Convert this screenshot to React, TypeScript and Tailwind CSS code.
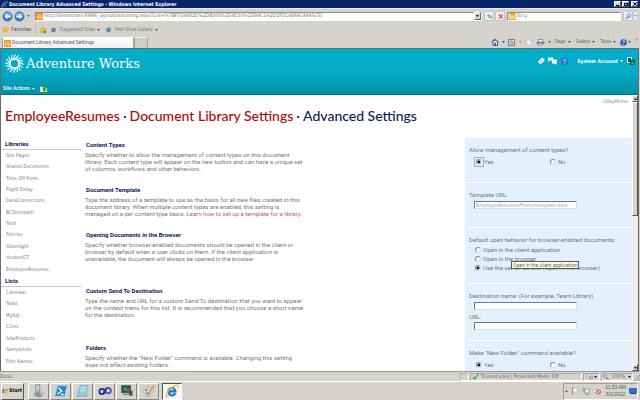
import React, { ReactNode } from "react";

const sans = "font-['Roboto','Liberation_Sans',Arial,sans-serif]";
const ui = "font-['DejaVu_Sans_Condensed','DejaVu_Sans',sans-serif]";

const libraries = ["Site Pages", "Shared Documents", "Time Off Form", "Flight Delay", "DataConnections", "BCSInfopath", "Testt", "Policies", "Silverlight", "studentCT", "EmployeeResumes"];
const lists = ["Calendar", "Tasks", "MySql", "Cities", "AdwProducts", "SampleInfo", "Pilot Names"];

function FeedIcon() {
  return (
    <svg viewBox="0 0 8 8" className="size-[7px] shrink-0">
      <rect width="8" height="8" rx="1" fill="#f78f1e" />
      <path d="M1.500 6.500V4L4 1.500 6.500 4v2.500M3 6.500V4.700l1-1 1 1v1.800" stroke="#fff" strokeWidth=".8" fill="none" />
    </svg>
  );
}

function IEIcon({ className }: { className: string }) {
  return (
    <svg viewBox="0 0 16 16" className={className}>
      <path d="M13 9.500H5.600c.2 3 3.600 3.200 4.400 1.200h2.800C11 15.600 3 15 3 8.600 3 2.500 13 1.500 13 9.500zM5.700 7.200h4.500c-.3-2.600-4.200-2.600-4.500 0z" fill="#1e7fd6" stroke="#1460b0" strokeWidth=".5" />
      <path d="M4.500 13.500C1 16 .5 13.500 2.500 10 5 5.500 10 1.500 13.500 1.200c2-.1 1.800 1.800.8 3.600" fill="none" stroke="#f2b632" strokeWidth="1.400" />
    </svg>
  );
}

function Star({ className, add }: { className: string; add?: boolean }) {
  return (
    <svg viewBox="0 0 10 10" className={className}>
      <path d="M5 .5l1.300 3 3.200.3-2.400 2.100.8 3.200L5 7.500 2.100 9.100l.8-3.200L.5 3.800l3.200-.3z" fill="#fdc02f" stroke="#d98e12" strokeWidth=".6" />
      {add && <path d="M5 6.500h2v-2l3 3-3 2.500V8.500H5z" fill="#3fae3a" />}
    </svg>
  );
}

function Down({ className = "text-[#444]" }: { className?: string }) {
  return (
    <svg viewBox="0 0 4 3" className={`h-[2px] w-[3px] shrink-0 ${className}`}>
      <path d="M0 0h4L2 3z" fill="currentColor" />
    </svg>
  );
}

function NavArrow({ back }: { back?: boolean }) {
  return (
    <button aria-label={back ? "Back" : "Forward"} className="size-[11px] shrink-0">
      <svg viewBox="0 0 12 12" className="size-[11px]">
        <circle cx="6" cy="6" r="5.500" fill="#2e74c9" stroke="#9db4d0" strokeWidth=".8" />
        <path d="M1.500 5a4.600 4 0 0 1 9 0z" fill="#7eb0ea" />
        <path d={back ? "M2.500 6L6 3v2h3.500v2H6v2z" : "M9.500 6L6 3v2H2.500v2H6v2z"} fill="#fff" />
      </svg>
    </button>
  );
}

function TitleBar() {
  const btn = "flex h-[6px] w-[7px] items-center justify-center border border-t-white border-l-white border-r-[#555] border-b-[#555] bg-[#d6d3ce]";
  return (
    <div className="flex h-2 items-center gap-px bg-[#08246b] pr-[2px] pl-px">
      <IEIcon className="size-[7px]" />
      <h1 className={`flex-1 text-[5px] leading-[8px] font-bold whitespace-nowrap text-white ${ui}`}>Document Library Advanced Settings - Windows Internet Explorer</h1>
      <button aria-label="Minimize" className={btn}><span className="mt-[2px] h-px w-[3px] bg-black" /></button>
      <button aria-label="Restore" className={btn}><span className="h-[3px] w-[4px] border border-black" /></button>
      <button aria-label="Close" className={`ml-px ${btn}`}>
        <svg viewBox="0 0 4 4" className="size-[4px]"><path d="M.3.3l3.400 3.400M3.700.3L.3 3.700" stroke="#000" /></svg>
      </button>
    </div>
  );
}

function AddressRow() {
  const btn = "flex h-[10px] items-center justify-center rounded-[1px] border border-[#c3c6d0] bg-[#eceef6]";
  return (
    <div className="flex h-[15px] items-center border-t border-[#ece9e4] pl-[2px] pr-[2px]">
      <NavArrow back />
      <span className="w-px" />
      <NavArrow />
      <span className="ml-[2px] flex w-[8px]"><Down className="text-[#2a6a9a]" /></span>
      <div className="flex h-[9px] flex-1 items-center border border-[#8c8c8c] border-r-white border-b-white bg-white">
        <FeedIcon />
        <input aria-label="Address" readOnly value="http://demoshare:6969/_layouts/advsetng.aspx?List=%7BF7D4882D%2DB300%2D4D30%2D99C1%2D2FD14864C46A%7D" className={`h-[7px] min-w-0 flex-1 pl-px text-[5px] text-[#777] outline-none ${ui}`} />
        <button aria-label="Show history" className="flex h-[8px] w-[7px] items-center justify-center border border-t-white border-l-white border-r-[#666] border-b-[#666] bg-[#d6d3ce]"><Down className="text-black" /></button>
      </div>
      <button aria-label="Refresh" className={`ml-[2px] w-[10px] ${btn}`}>
        <svg viewBox="0 0 8 8" className="size-[7px]"><path d="M3 5V2.500M1.500 3.500L3 2l1.500 1.500M5.500 3v2.500M4 4.500L5.500 6 7 4.500" stroke="#2c9a3f" fill="none" /></svg>
      </button>
      <button aria-label="Stop" className={`ml-px w-[10px] ${btn}`}>
        <svg viewBox="0 0 8 8" className="size-[7px]"><path d="M2 1.500l4.500 5M6.500 1.500l-4.500 5" stroke="#d9403c" strokeWidth="1.200" /></svg>
      </button>
      <label className="ml-[2px] flex h-[9px] w-[114px] items-center border border-[#8c8c8c] border-r-white border-b-white bg-white">
        <svg viewBox="0 0 8 8" className="h-[7px] w-[8px]"><rect width="8" height="8" fill="#f9a11b" /><path d="M1.500 1v5h4.500V3.500H1.500" stroke="#fff" fill="none" /></svg>
        <input aria-label="Search" placeholder="Bing" className={`h-[7px] min-w-0 flex-1 pl-px text-[5px] text-[#777] outline-none placeholder:text-[#999] ${ui}`} />
      </label>
      <button aria-label="Search" className={`ml-[2px] w-[10px] ${btn}`}>
        <svg viewBox="0 0 8 8" className="size-[7px]"><circle cx="4.800" cy="3" r="2" fill="#dce9fb" stroke="#4b7fd0" /><path d="M3.300 4.500L1 7" stroke="#4b7fd0" strokeWidth="1.200" /></svg>
      </button>
      <button aria-label="Search options" className={`w-[5px] ${btn}`}><Down className="text-[#7a9ad0]" /></button>
    </div>
  );
}

function FavoritesRow() {
  return (
    <div className={`flex h-[13px] items-center pl-[2px] text-[5px] text-[#858585] ${sans}`}>
      <button className={`flex items-center gap-[2px] text-[#555] ${sans}`}><Star className="size-[7px]" />Favorites</button>
      <span className="mr-[3px] ml-[4px] h-[9px] w-px bg-[#b5b2ad]" />
      <button aria-label="Add to favorites"><Star add className="size-[8px]" /></button>
      <button className="ml-[3px] flex items-center gap-[2px]"><IEIcon className="size-[7px]" />Suggested Sites <Down /></button>
      <button className="ml-[5px] flex items-center gap-[2px]"><IEIcon className="size-[7px]" />Web Slice Gallery <Down /></button>
    </div>
  );
}

function TabRow() {
  return (
    <div className={`flex h-3 items-center justify-between text-[5px] text-[#555] ${ui}`}>
      <div className="flex h-full items-end">
        <button className={`ml-[2px] flex h-[11px] w-[132px] items-center gap-px rounded-t-[1px] border border-b-0 border-[#a5a29d] border-t-white bg-linear-to-b from-white to-[#f0efed] pl-px ${sans}`}>
          <FeedIcon />Document Library Advanced Settings
        </button>
        <button aria-label="New tab" className="h-[11px] w-[14px] border-x border-t border-[#a5a29d] border-t-[#f4f3f1] bg-[#cfccc7]" />
      </div>
      <div className="flex items-center pr-[2px]">
        <button aria-label="Home" className="flex items-center gap-[3px]">
          <svg viewBox="0 0 8 8" className="size-[8px]"><path d="M.5 4L4 1l3.500 3" stroke="#5a6c92" fill="none" /><path d="M2 3.500v4h4.500v-4L4 2z" fill="#fff" stroke="#33508e" /><rect x="3.500" y="4.500" width="1.500" height="3" fill="#33508e" /></svg><Down />
        </button>
        <button aria-label="Feeds" className="ml-[3px] flex items-center gap-[4px]">
          <svg viewBox="0 0 8 8" className="size-[7px]"><rect x=".5" y=".5" width="7" height="7" fill="#ddd" stroke="#777" /><path d="M2 6h.5M2 4a2 2 0 0 1 2 2M2 2a4 4 0 0 1 4 4" stroke="#777" fill="none" /></svg><Down className="text-[#999]" />
        </button>
        <button aria-label="Read mail" className="ml-[4px]"><svg viewBox="0 0 8 6" className="h-[5px] w-[7px]"><rect width="8" height="6" fill="#f7f7fa" stroke="#aaa" /><path d="M5 2.500h2.500" stroke="#e2704f" /></svg></button>
        <button aria-label="Print" className="ml-[3px] flex items-center gap-[3px]">
          <svg viewBox="0 0 10 8" className="h-[7px] w-[9px]"><rect x="2.500" y=".5" width="5" height="3" fill="#fff" stroke="#888" /><rect x=".5" y="3" width="9" height="3" rx="1" fill="#7d828c" /><rect x="2.500" y="5" width="5" height="2.500" fill="#c9dafa" stroke="#777" strokeWidth=".5" /></svg><Down />
        </button>
        <button className="ml-[4px] flex items-center gap-[2px]">Page <Down /></button>
        <button className="ml-[5px] flex items-center gap-[2px]">Safety <Down /></button>
        <button className="ml-[5px] flex items-center gap-[2px]">Tools <Down /></button>
        <button aria-label="Help" className="ml-[4px] flex items-center gap-px">
          <svg viewBox="0 0 8 8" className="size-[7px]"><circle cx="4" cy="4" r="3.800" fill="#2a5cc0" /><path d="M2.800 3c0-1.600 2.500-1.500 2.400 0C5.200 4 4 3.800 4 5M4 5.800v.8" stroke="#fff" fill="none" strokeWidth=".9" /></svg><Down />
        </button>
        <span className="mb-[4px] ml-[4px]">»</span>
      </div>
    </div>
  );
}

function SiteHeader() {
  return (
    <header className="flex h-[46px] flex-col justify-between border-b border-[#04707f] bg-linear-to-b from-[#02aecb] via-[#04abc6] to-[#0290a6]">
      <div className="flex items-start justify-between">
        <div className="flex items-center gap-[2px] pt-[5px] pl-[4px]">
          <svg viewBox="-10 -10 20 20" className="size-[19px]">
            {[0, 22.5, 45, 67.5, 90, 112.5, 135, 157.5, 180, 202.5, 225, 247.5, 270, 292.5, 315, 337.5].map((a) => (
              <path key={a} transform={`rotate(${a})`} d="M-2.500-4Q2-5 4.500-8.500" fill="none" stroke="#fff" strokeWidth="1.200" />
            ))}
          </svg>
          <span className="text-[13px] leading-[18px] whitespace-nowrap text-white font-['DejaVu_Serif',serif]">Adventure Works</span>
        </div>
        <div className={`flex items-center gap-[3px] pt-[8px] pr-[3px] ${ui}`}>
          <svg viewBox="0 0 8 8" className="size-[8px]"><path d="M1 5l3.500-4 3 .5L7 4 3.500 7.500z" fill="#fff" /><path d="M3 5l2-2" stroke="#0aa" strokeWidth=".7" /></svg>
          <svg viewBox="0 0 9 8" className="h-[8px] w-[9px]"><path d="M0 .5h5v3h-3L.5 5zM4 2.500h5v4H8V8L6 6.500H4z" fill="#fff" /></svg>
          <svg viewBox="0 0 8 8" className="mx-px size-[7px]"><circle cx="4" cy="4" r="4" fill="#2f6fd0" /><path d="M2.800 3c0-1.600 2.500-1.500 2.400 0C5.200 4 4 3.800 4 5M4 5.800v.8" stroke="#fff" fill="none" strokeWidth=".9" /></svg>
          <button className="ml-[5px] flex items-center gap-[2px] text-[5px] leading-[8px] font-bold text-white">System Account <Down className="text-white" /></button>
          <svg viewBox="0 0 8 8" className="ml-px size-[8px]"><path d="M.5.5h4v5h-4z" fill="#157" stroke="#fff" /><rect x="3" y="3" width="4.500" height="4.500" fill="#174" stroke="#333" strokeWidth=".6" /><path d="M4.500 6h2" stroke="#dd4" /></svg>
        </div>
      </div>
      <div className={`flex h-[11px] items-center pl-[2px] text-[5px] font-medium text-white ${sans}`}>
        <button className="flex items-center gap-[2px]">Site Actions <Down className="text-white" /></button>
        <button aria-label="Navigate up" className="ml-[5px]"><svg viewBox="0 0 8 7" className="h-[6px] w-[7px]"><path d="M0 1h3l1 1h4v5H0z" fill="#f3e3a0" /><path d="M3.500 6V3.500H2.500L5 1l2.500 2.500h-1V6z" fill="#2fa32f" /></svg></button>
      </div>
    </header>
  );
}

function NavGroup({ title, items, height }: { title: string; items: string[]; height: string }) {
  return (
    <section>
      <h3 className={`h-[12px] border-b border-[#c9c9c9] pl-[4px] text-[6px] leading-[12px] font-bold text-[#0a1a5c] ${sans}`}>{title}</h3>
      <ul className={`grid auto-rows-fr items-center pl-[5px] text-[5px] ${height} ${ui}`}>
        {items.map((i) => (
          <li key={i} className="flex"><a href="#" className="text-[#7a7a7a]">{i}</a></li>
        ))}
      </ul>
    </section>
  );
}

function Row({ title, lines, height, children }: { title: string; lines: ReactNode[]; height: string; children: ReactNode }) {
  return (
    <section className={`flex shrink-0 ${height}`}>
      <div className="flex-1 pt-[3px] pl-[4px] whitespace-nowrap">
        <h3 className={`pl-px text-[6px] leading-[8px] font-bold text-[#0a1a5c] ${sans}`}>{title}</h3>
        <p className={`pt-[2px] text-[6px] leading-[7px] text-[#777] ${sans}`}>
          {lines.map((l, n) => <span key={n} className="block">{l}</span>)}
        </p>
      </div>
      <div className={`w-[167px] border-b border-white bg-[#e3f1ff] pt-[8px] pl-[4px] text-[6px] leading-[8px] whitespace-nowrap text-[#6c7680] ${sans}`}>{children}</div>
    </section>
  );
}

function Radio({ name, label, checked, focus }: { name: string; label: string; checked?: boolean; focus?: boolean }) {
  return (
    <label className="flex items-center">
      <span className={`flex size-[8px] items-center justify-center ${focus ? "outline outline-[#aaa]" : ""}`}>
        <input type="radio" name={name} defaultChecked={checked} className="size-[6px] appearance-none rounded-full border border-[#8a8a8a] border-r-[#ddd] border-b-[#ddd] bg-white checked:bg-[radial-gradient(circle,#111_1px,#fff_2px)]" />
      </span>
      <span className="pl-px">{label}</span>
    </label>
  );
}

const field = `ml-[5px] block h-[8px] w-[103px] border border-[#777] border-r-[#ddd] border-b-[#ddd] bg-white px-px text-[5px] outline-none ${ui}`;

function YesNo({ name, focus }: { name: string; focus?: boolean }) {
  return (
    <div className="mt-[4px] grid w-[154px] grid-cols-2 pl-[6px]">
      <Radio name={name} label="Yes" checked focus={focus} />
      <Radio name={name} label="No" />
    </div>
  );
}

function Settings() {
  return (
    <div className="min-w-0 flex-1">
      <Row title="Content Types" height="h-[45px]" lines={["Specify whether to allow the management of content types on this document", "library. Each content type will appear on the new button and can have a unique set", "of columns, workflows and other behaviors."]}>
        <p>Allow management of content types?</p>
        <YesNo name="ct" focus />
      </Row>
      <Row title="Document Template" height="h-[45px]" lines={["Type the address of a template to use as the basis for all new files created in this", "document library. When multiple content types are enabled, this setting is", <>managed on a per content type basis. <a href="#" className="text-[#c0605a]">Learn how to set up a template for a library.</a></>]}>
        <label htmlFor="tpl" className="block">Template URL:</label>
        <input id="tpl" readOnly value="EmployeeResumes/Forms/template.dotx" className={`mt-[2px] text-[#999] ${field}`} />
      </Row>
      <Row title="Opening Documents in the Browser" height="h-[56px]" lines={["Specify whether browser-enabled documents should be opened in the client or", "browser by default when a user clicks on them. If the client application is", "unavailable, the document will always be opened in the browser."]}>
        <p>Default open behavior for browser-enabled documents:</p>
        <div className="relative mt-[2px] flex flex-col gap-px pl-[5px]">
          <Radio name="open" label="Open in the client application" />
          <Radio name="open" label="Open in the browser" />
          <Radio name="open" label="Use the server default (Open in the browser)" checked />
          <span role="tooltip" className="absolute top-[15px] left-[42px] h-[8px] border border-[#555] bg-[#ffffe1] px-px text-[5px] leading-[6px] text-[#666] font-['Roboto','Liberation_Sans',sans-serif]">Open in the client application</span>
        </div>
      </Row>
      <Row title="Custom Send To Destination" height="h-[57px]" lines={["Type the name and URL for a custom Send To destination that you want to appear", "on the context menu for this list. It is recommended that you choose a short name", "for the destination."]}>
        <label htmlFor="dest" className="block">Destination name: (For example, Team Library)</label>
        <input id="dest" className={`mt-[2px] ${field}`} />
        <label htmlFor="durl" className="mt-[3px] block">URL:</label>
        <input id="durl" className={`mt-px ${field}`} />
      </Row>
      <Row title="Folders" height="h-[46px]" lines={["Specify whether the \"New Folder\" command is available. Changing this setting", "does not affect existing folders."]}>
        <p>Make "New Folder" command available?</p>
        <YesNo name="nf" />
      </Row>
    </div>
  );
}

function ScrollBar() {
  const btn = "flex h-[7px] shrink-0 items-center justify-center border border-t-white border-l-white border-r-[#555] border-b-[#555] bg-[#d6d3ce]";
  return (
    <div className="flex w-[6px] shrink-0 flex-col bg-[#f0eeec]">
      <button aria-label="Scroll up" className={btn}><Down className="rotate-180 text-black" /></button>
      <div className="h-[114px] border border-t-white border-l-white border-r-[#555] border-b-[#555] bg-[#d6d3ce]" />
      <div className="flex-1" />
      <button aria-label="Scroll down" className={btn}><Down className="text-black" /></button>
    </div>
  );
}

function StatusBar() {
  const cell = "flex h-[8px] items-center border border-[#b0ada8] border-r-white border-b-white";
  return (
    <div className={`flex h-[10px] items-center gap-px border-t border-[#9a9894] bg-[#d6d3ce] text-[5px] text-[#666] ${ui}`}>
      <span className="flex-1">Done</span>
      <span className={`w-[9px] ${cell}`} />
      <div className={`w-[112px] gap-[2px] pl-px whitespace-nowrap ${cell}`}>
        <svg viewBox="0 0 8 8" className="size-[7px]"><path d="M1 4.500L3 7l4.500-6.500" fill="none" stroke="#35b535" strokeWidth="1.500" /></svg>
        Trusted sites | Protected Mode: Off
      </div>
      <div className={`w-[17px] justify-between px-[2px] ${cell}`}>
        <svg viewBox="0 0 8 8" className="size-[7px]"><circle cx="3" cy="3.500" r="2.500" fill="#eee" stroke="#999" /><rect x="4" y="4" width="3.500" height="3" fill="#bbb" stroke="#888" strokeWidth=".5" /></svg>
        <Down className="text-black" />
      </div>
      <div className={`w-[32px] justify-between px-px ${cell}`}>
        <svg viewBox="0 0 8 8" className="size-[6px]"><circle cx="3" cy="3" r="2" fill="#cfe4fb" stroke="#3b83d0" /><path d="M4.500 4.500L7.500 7.500" stroke="#a86b32" strokeWidth="1.400" /></svg>
        <span>100%</span>
        <Down className="text-black" />
      </div>
      <svg viewBox="0 0 6 6" className="size-[6px] self-end"><path d="M0 6L6 0M2.500 6L6 2.500M5 6l1-1" stroke="#8c8a86" strokeWidth=".8" /></svg>
    </div>
  );
}

function TaskButton({ label, children }: { label: string; children: ReactNode }) {
  return (
    <button aria-label={label} className="flex h-[17px] w-[21px] items-center justify-center border border-t-white border-l-white border-r-[#8a8884] border-b-[#8a8884] bg-[#d6d3ce]">
      <svg viewBox="0 0 16 16" className="size-[14px]">{children}</svg>
    </button>
  );
}

function TaskBar() {
  return (
    <footer className={`flex h-[19px] items-center border-t border-white bg-[#d6d3ce] pr-[2px] pl-px ${sans}`}>
      <button className={`mr-[4px] flex h-[17px] w-[23px] shrink-0 items-center gap-px border border-t-white border-l-white border-r-[#555] border-b-[#555] text-[5px] font-bold text-black ${ui}`}>
        <svg viewBox="0 0 8 8" className="size-[6px] shrink-0"><path d="M.5 1.500Q2 .5 3.600 1.500v2.200Q2 3-.1 3.700z" fill="#e8502c" /><path d="M4.200 1.800Q6 2.600 8 1.500L7.500 3.900Q6 4.600 4 4z" fill="#74b72e" /><path d="M0 4.400Q2 3.600 3.500 4.500L3 6.800Q1.500 6-.3 6.700z" fill="#3c7fd9" /><path d="M4 4.700q1.800.7 3.500 0L7 7Q5.500 7.600 3.500 7z" fill="#f5bd1c" /></svg>
        Start
      </button>
      <div className="flex gap-px">
        <TaskButton label="Server Manager"><path d="M4 1l5-.5V11l-5 1z" fill="#a9b6bf" stroke="#6c7a84" strokeWidth=".6" /><path d="M5 3h3M5 5h3" stroke="#eef" /><path d="M3 11l6-2 5 2-5 4-6-2z" fill="#8c9aa3" stroke="#67747d" strokeWidth=".5" /><circle cx="12" cy="10" r="2.500" fill="#b8c2c8" /></TaskButton>
        <TaskButton label="PowerShell"><path d="M4 2h11l-3 12H1z" fill="#2a86d0" stroke="#9fd0f5" strokeWidth=".7" /><path d="M5 4.500l4 3.500-5 3.500M8 12h3" fill="none" stroke="#fff" strokeWidth="1.500" /></TaskButton>
        <TaskButton label="Notepad"><path d="M5 1.500h9L11 14H1z" fill="#8fcfdc" stroke="#5c9fae" strokeWidth=".6" /><path d="M6 4h6M5.500 6h6M5 8h6" stroke="#d8f1f5" strokeWidth=".8" /><path d="M11 14l3-3-1 3z" fill="#c8a24c" /></TaskButton>
        <TaskButton label="Visual Studio"><circle cx="4.500" cy="8.500" r="3" fill="none" stroke="#222c86" strokeWidth="2" /><circle cx="11.500" cy="7.500" r="3.200" fill="none" stroke="#3b55b8" strokeWidth="2" /><path d="M6.500 10.500l3-5" stroke="#222c86" strokeWidth="2" /></TaskButton>
        <TaskButton label="Monitor"><rect x="2" y="2" width="10" height="8" fill="#2c5a3c" stroke="#445" /><path d="M3 6h2l1-2 1 4 1-2h3" fill="none" stroke="#5fd66c" strokeWidth=".8" /><path d="M9 8h5v5h-3zM4 12h6" fill="#555" stroke="#666" /></TaskButton>
        <TaskButton label="Paint"><path d="M2 8c0-4 6-6 9-4s3 5 0 6-1 4-4 4-5-2-5-6z" fill="#cde2f1" stroke="#7fa3bd" strokeWidth=".7" /><circle cx="5" cy="7" r="1.200" fill="#e04b3a" /><circle cx="8" cy="5.500" r="1.200" fill="#f2c12e" /><circle cx="5.500" cy="10.500" r="1.200" fill="#3c9a4a" /><path d="M14 1L8 10l-1 3" fill="none" stroke="#d88a2c" strokeWidth="1.600" /></TaskButton>
        <span className="w-px" />
        <button aria-label="Internet Explorer" className="flex h-[17px] w-[20px] items-center justify-center border border-[#555] border-r-white border-b-white bg-[#f6f5f4]"><IEIcon className="size-[14px]" /></button>
      </div>
      <div className="ml-auto flex h-[17px] items-center gap-[3px] border border-[#a09e9a] border-r-white border-b-white pl-px text-[5px] text-[#555] font-['Liberation_Sans',Arial,sans-serif]">
        <Down className="rotate-180" />
        <svg viewBox="0 0 8 8" className="size-[8px]"><path d="M1.500 0v8" stroke="#888" /><path d="M2 1h5l-1 2 1 2H2z" fill="#fff" stroke="#999" strokeWidth=".6" /></svg>
        <svg viewBox="0 0 8 8" className="size-[8px]"><rect x="2.500" y="2" width="5" height="4" fill="#e8e8e8" stroke="#888" strokeWidth=".7" /><path d="M1 0v4h2M3 7.500h4" stroke="#888" fill="none" strokeWidth=".8" /></svg>
        <svg viewBox="0 0 8 8" className="size-[8px]"><path d="M0 3h2l2-2v6L2 5H0z" fill="#eee" stroke="#999" strokeWidth=".5" /><circle cx="5.500" cy="5" r="2" fill="#fff" stroke="#df3a32" /><path d="M4 3.600l3 2.800" stroke="#df3a32" /></svg>
        <div className="ml-px text-center leading-[7px] whitespace-nowrap"><div>11:33 AM</div><div>5/1/2012</div></div>
        <svg viewBox="0 0 8 6" className="h-[6px] w-[8px]"><rect width="8" height="5" fill="#2f72c4" /><path d="M1 5.500h6" stroke="#335" /></svg>
      </div>
    </footer>
  );
}

export default function App() {
  return (
    <div className="flex h-screen flex-col overflow-hidden bg-[#d6d3ce]">
      <TitleBar />
      <AddressRow />
      <FavoritesRow />
      <TabRow />
      <div className="mr-px flex min-h-0 flex-1 flex-col border border-b-0 border-[#6a6a6a] bg-white">
        <SiteHeader />
        <div className="flex min-h-0 flex-1">
          <main className="flex min-w-0 flex-1 flex-col overflow-hidden">
            <a href="#" className={`h-[12px] self-end pr-[4px] text-[5px] leading-[12px] text-[#888] ${ui}`}>UdayHome</a>
            <h2 className="h-[31px] pl-[4px] text-[14px] leading-[18px] font-medium whitespace-nowrap text-[#0a1a5c] font-['Lato','Open_Sans',sans-serif]">
              <a href="#" className="text-[#ac0a05]">EmployeeResumes</a>
              <span className="px-[3px]">·</span>
              <a href="#" className="text-[#ac0a05]">Document Library Settings</a>
              <span className="px-[3px]">·</span>
              Advanced Settings
            </h2>
            <div className="flex min-h-0 flex-1">
              <nav className="w-[80px] shrink-0">
                <NavGroup title="Libraries" items={libraries} height="h-[125px]" />
                <NavGroup title="Lists" items={lists} height="h-[80px]" />
              </nav>
              <Settings />
            </div>
          </main>
          <ScrollBar />
        </div>
      </div>
      <StatusBar />
      <TaskBar />
    </div>
  );
}
